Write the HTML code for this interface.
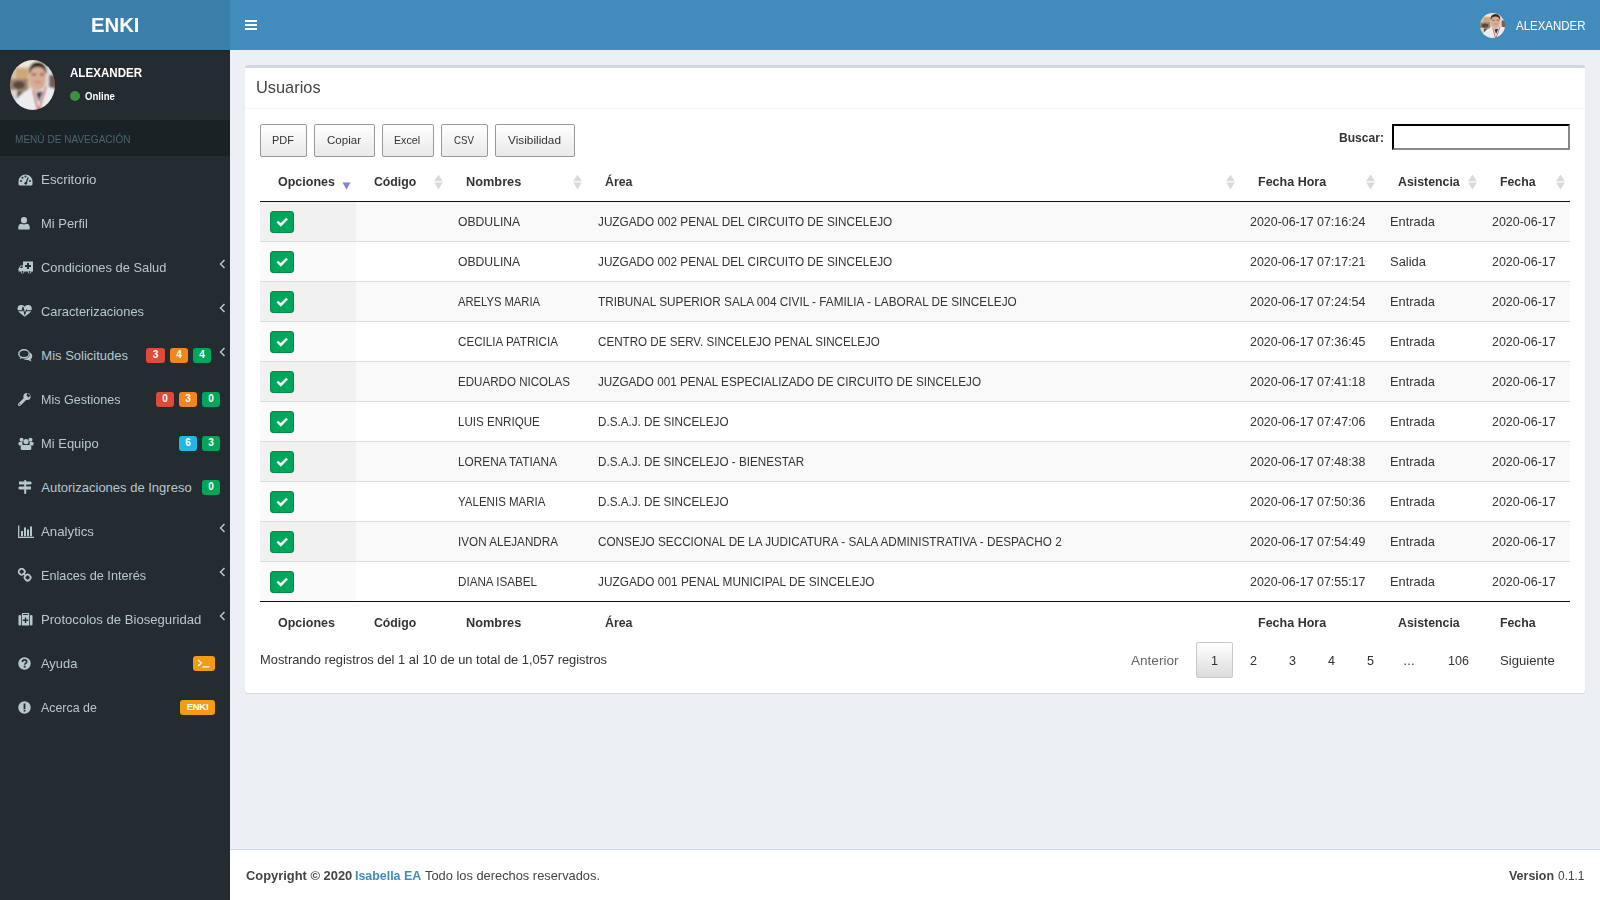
<!DOCTYPE html>
<html><head><meta charset="utf-8"><title>ENKI</title>
<style>
html,body{margin:0;padding:0;width:1600px;height:900px;overflow:hidden;background:#ecf0f5;font-family:"Liberation Sans",sans-serif;}
.t{position:absolute;white-space:nowrap;transform-origin:0 50%;}
.av{position:absolute;border-radius:50%;background:radial-gradient(ellipse at 55% 45%,#e8c9b0 0%,#c9a58a 22%,#f0eeec 40%,#dcd6d2 60%,#8a7060 85%,#5a4a40 100%);}
.bd{position:absolute;height:15px;border-radius:3px;color:#fff;font-weight:bold;text-align:center;line-height:14.5px;}
.btn{position:absolute;box-sizing:border-box;border:1px solid #999;border-radius:2px;background:linear-gradient(to bottom,#fff 0%,#e9e9e9 100%);}
.chk{position:absolute;width:24px;height:22px;box-sizing:border-box;background:#00a65a;border:1px solid #008d4c;border-radius:3px;display:flex;align-items:center;justify-content:center;}
</style></head><body>
<div style="position:absolute;left:0;top:0;width:230px;height:50px;background:#3d7fab"></div>
<div style="position:absolute;left:230px;top:0;width:1370px;height:50px;background:#428cbd"></div>
<div class="t" style="left:90.80px;top:14.87px;font-size:20px;line-height:20px;color:#fff;font-weight:bold;transform:scaleX(1.0150);">ENKI</div>
<div style="position:absolute;left:245px;top:20px;width:12px;height:2px;background:#fff"></div>
<div style="position:absolute;left:245px;top:24px;width:12px;height:2px;background:#fff"></div>
<div style="position:absolute;left:245px;top:28px;width:12px;height:2px;background:#fff"></div>
<svg style="position:absolute;left:1480px;top:12.7px" width="25" height="25" viewBox="0 0 45 50" preserveAspectRatio="none"><defs><clipPath id="avn"><ellipse cx="22.5" cy="25" rx="22.5" ry="25"/></clipPath><filter id="avnb"><feGaussianBlur stdDeviation="0.8"/></filter></defs><g clip-path="url(#avn)"><g filter="url(#avnb)"><rect x="-2" y="-2" width="50" height="54" fill="#d8c2a6"/><rect x="-2" y="-2" width="50" height="9" fill="#eee6dc"/><rect x="6" y="9" width="12" height="11" fill="#cda77a"/><rect x="-2" y="19" width="20" height="13" fill="#9a8270"/><ellipse cx="9" cy="25" rx="6" ry="4" fill="#5a463c"/><rect x="-2" y="30" width="9" height="20" fill="#d9d2ce"/><rect x="7" y="32" width="6" height="18" fill="#6a5040"/><rect x="34" y="2" width="14" height="24" fill="#dcdadd"/><rect x="39" y="15" width="9" height="13" fill="#7a5a55"/><path d="M19.5 14Q19.5 5 27.5 4.5Q35.5 5 36 14L35.5 22Q34 29 28 30Q21.5 29 20 22Z" fill="#d9ab95"/><path d="M19 14Q18.5 2 28 2Q37 2.5 36.5 14L35 12Q34 7 28 7Q21 7 20.5 12Z" fill="#35261f"/><path d="M22 14.5H26M30 14.5H34" stroke="#5a3a30" stroke-width="1.3"/><path d="M25 22H31" stroke="#a06a5a" stroke-width="0.9"/><path d="M3 50L6 40Q12 32 21 28L27 33L36 26Q42 27 47 32L47 50Z" fill="#ececef"/><path d="M23 30L28 50" stroke="#c44a4a" stroke-width="1.5"/><path d="M36 27L29 50" stroke="#c44a4a" stroke-width="1.5"/><path d="M26 33L29 42L33 31Z" fill="#2f3444"/></g></g></svg>
<div class="t" style="left:1515.50px;top:19.84px;font-size:12px;line-height:12px;color:#fff;transform:scaleX(0.9561);">ALEXANDER</div>
<div style="position:absolute;left:0;top:50px;width:230px;height:850px;background:#242c32"></div>
<div style="position:absolute;left:0;top:50px;width:230px;height:1px;background:#1b2730"></div>
<svg style="position:absolute;left:10px;top:60px" width="45" height="50" viewBox="0 0 45 50" preserveAspectRatio="none"><defs><clipPath id="avs"><ellipse cx="22.5" cy="25" rx="22.5" ry="25"/></clipPath><filter id="avsb"><feGaussianBlur stdDeviation="0.8"/></filter></defs><g clip-path="url(#avs)"><g filter="url(#avsb)"><rect x="-2" y="-2" width="50" height="54" fill="#d8c2a6"/><rect x="-2" y="-2" width="50" height="9" fill="#eee6dc"/><rect x="6" y="9" width="12" height="11" fill="#cda77a"/><rect x="-2" y="19" width="20" height="13" fill="#9a8270"/><ellipse cx="9" cy="25" rx="6" ry="4" fill="#5a463c"/><rect x="-2" y="30" width="9" height="20" fill="#d9d2ce"/><rect x="7" y="32" width="6" height="18" fill="#6a5040"/><rect x="34" y="2" width="14" height="24" fill="#dcdadd"/><rect x="39" y="15" width="9" height="13" fill="#7a5a55"/><path d="M19.5 14Q19.5 5 27.5 4.5Q35.5 5 36 14L35.5 22Q34 29 28 30Q21.5 29 20 22Z" fill="#d9ab95"/><path d="M19 14Q18.5 2 28 2Q37 2.5 36.5 14L35 12Q34 7 28 7Q21 7 20.5 12Z" fill="#35261f"/><path d="M22 14.5H26M30 14.5H34" stroke="#5a3a30" stroke-width="1.3"/><path d="M25 22H31" stroke="#a06a5a" stroke-width="0.9"/><path d="M3 50L6 40Q12 32 21 28L27 33L36 26Q42 27 47 32L47 50Z" fill="#ececef"/><path d="M23 30L28 50" stroke="#c44a4a" stroke-width="1.5"/><path d="M36 27L29 50" stroke="#c44a4a" stroke-width="1.5"/><path d="M26 33L29 42L33 31Z" fill="#2f3444"/></g></g></svg>
<div class="t" style="left:69.70px;top:66.74px;font-size:12px;line-height:12px;color:#fff;font-weight:bold;transform:scaleX(0.9655);">ALEXANDER</div>
<div style="position:absolute;left:70px;top:91px;width:10px;height:10px;border-radius:50%;background:#3d9142"></div>
<div class="t" style="left:85.00px;top:92.13px;font-size:10px;line-height:10px;color:#fff;font-weight:bold;transform:scaleX(0.9610);">Online</div>
<div style="position:absolute;left:0;top:120px;width:230px;height:36px;background:#1a2226"></div>
<div class="t" style="left:15.30px;top:133.59px;font-size:11px;line-height:11px;color:#4b646f;transform:scaleX(0.9144);">MENÚ DE NAVEGACIÓN</div>
<div class="t" style="left:41.30px;top:173.00px;font-size:13px;line-height:13px;color:#b8c7ce;transform:scaleX(1.0244);">Escritorio</div>
<div style="position:absolute;left:18px;top:174px;line-height:0"><svg width="15" height="12" viewBox="0 0 15 12"><path d="M7.5 0.5A7 7 0 0 0 0.5 7.5V10Q0.5 11.5 2 11.5H13Q14.5 11.5 14.5 10V7.5A7 7 0 0 0 7.5 0.5Z" fill="#b8c7ce"/><circle cx="3" cy="7" r="1" fill="#242c32"/><circle cx="4.5" cy="3.8" r="1" fill="#242c32"/><circle cx="7.5" cy="2.5" r="1" fill="#242c32"/><circle cx="12" cy="7" r="1" fill="#242c32"/><path d="M10.2 3.5L8.3 8.6" stroke="#242c32" stroke-width="1.3"/><circle cx="7.8" cy="9.3" r="1.4" fill="#242c32"/></svg></div>
<div class="t" style="left:41.30px;top:217.00px;font-size:13px;line-height:13px;color:#b8c7ce;transform:scaleX(0.9968);">Mi Perfil</div>
<div style="position:absolute;left:18px;top:217px;line-height:0"><svg width="12" height="13" viewBox="0 0 12 13"><circle cx="6" cy="3.2" r="3.1" fill="#b8c7ce"/><path d="M0.3 12.5V10.5Q0.3 7 3.5 6.8Q6 8 8.5 6.8Q11.7 7 11.7 10.5V12.5Z" fill="#b8c7ce"/></svg></div>
<div class="t" style="left:41.30px;top:261.00px;font-size:13px;line-height:13px;color:#b8c7ce;transform:scaleX(0.9915);">Condiciones de Salud</div>
<div style="position:absolute;left:18px;top:261px;line-height:0"><svg width="16" height="13" viewBox="0 0 16 13"><path d="M5 0.5H15V10.5H13.5A2 2 0 0 1 9.5 10.5H6.5A2 2 0 0 1 2.5 10.5H0.5V7.5L2.5 4.5H5Z" fill="#b8c7ce"/><path d="M9 2H11V4H13V6H11V8H9V6H7V4H9Z" fill="#242c32"/><path d="M2 7L3 5.2H4.5V7Z" fill="#242c32"/><circle cx="4.5" cy="11" r="1" fill="#242c32"/><circle cx="11.5" cy="11" r="1" fill="#242c32"/></svg></div>
<div class="t" style="left:41.30px;top:305.00px;font-size:13px;line-height:13px;color:#b8c7ce;transform:scaleX(0.9899);">Caracterizaciones</div>
<div style="position:absolute;left:17px;top:304px;line-height:0"><svg width="16" height="14" viewBox="-0.5 -0.5 16 14"><path d="M7.2 2.2C5.8 -0.3 0 -0.5 0 4C0 6 1.5 7.5 2.5 8.5L7.2 12.3L12 8.5C13 7.5 14.3 6 14.3 4C14.3 -0.5 8.6 -0.3 7.2 2.2Z" fill="#b8c7ce"/><path d="M-0.5 6.3H4.8L5.4 2.4L7.3 9.6L8.9 5.6L9.4 6.3H15" stroke="#242c32" stroke-width="1.1" fill="none"/></svg></div>
<div class="t" style="left:41.30px;top:349.00px;font-size:13px;line-height:13px;color:#b8c7ce;">Mis Solicitudes</div>
<div style="position:absolute;left:18px;top:349px;line-height:0"><svg width="15" height="13" viewBox="0 0 15 13"><ellipse cx="6" cy="4.8" rx="5.2" ry="4" stroke="#b8c7ce" stroke-width="1.4" fill="none"/><path d="M1.5 9.5L4 8L3 10Z" fill="#b8c7ce"/><path d="M12 3.5Q14.5 5 14.3 7.5Q14 9.5 12.5 10.3L13.5 12.5L10 11Q7 11.2 5.5 10Q9 10 11 8Q12.5 6 12 3.5Z" fill="#b8c7ce"/></svg></div>
<div class="t" style="left:41.30px;top:393.00px;font-size:13px;line-height:13px;color:#b8c7ce;transform:scaleX(0.9652);">Mis Gestiones</div>
<div style="position:absolute;left:18px;top:392px;line-height:0"><svg width="13" height="14" viewBox="0 0 13 14"><path d="M1.5 12.5L7 7" stroke="#b8c7ce" stroke-width="3" stroke-linecap="round"/><circle cx="9" cy="4.5" r="3.6" fill="#b8c7ce"/><path d="M9.5 1L12.5 3.5L10.5 5.5L8.5 3.5Z" fill="#242c32"/><circle cx="1.8" cy="12.2" r="0.6" fill="#242c32"/></svg></div>
<div class="t" style="left:41.30px;top:437.00px;font-size:13px;line-height:13px;color:#b8c7ce;transform:scaleX(0.9964);">Mi Equipo</div>
<div style="position:absolute;left:18px;top:437px;line-height:0"><svg width="16" height="13" viewBox="0 0 16 13"><circle cx="3.5" cy="2.8" r="2" fill="#b8c7ce"/><circle cx="12.5" cy="2.8" r="2" fill="#b8c7ce"/><rect x="0.5" y="5" width="4" height="3.5" rx="1" fill="#b8c7ce"/><rect x="11.5" y="5" width="4" height="3.5" rx="1" fill="#b8c7ce"/><circle cx="8" cy="4.6" r="2.6" fill="#b8c7ce"/><rect x="2.7" y="8" width="10.6" height="5" rx="1.5" fill="#b8c7ce"/></svg></div>
<div class="t" style="left:41.30px;top:481.00px;font-size:13px;line-height:13px;color:#b8c7ce;">Autorizaciones de Ingreso</div>
<div style="position:absolute;left:18px;top:480px;line-height:0"><svg width="14" height="14" viewBox="0 0 14 14"><rect x="6.2" y="0" width="2" height="14" rx="0.8" fill="#b8c7ce"/><path d="M1 1.5H12.5L14 3L12.5 4.5H1Z" fill="#b8c7ce"/><path d="M1.5 6.5H13V9.5H1.5L0 8Z" fill="#b8c7ce"/></svg></div>
<div class="t" style="left:41.30px;top:525.00px;font-size:13px;line-height:13px;color:#b8c7ce;transform:scaleX(1.0188);">Analytics</div>
<div style="position:absolute;left:18px;top:525px;line-height:0"><svg width="16" height="13" viewBox="0 0 16 13"><path d="M0.7 0.5V12.3H16" stroke="#b8c7ce" stroke-width="1.3" fill="none"/><rect x="3" y="6" width="2" height="5.3" fill="#b8c7ce"/><rect x="6" y="2.5" width="2" height="8.8" fill="#b8c7ce"/><rect x="9" y="4.5" width="2" height="6.8" fill="#b8c7ce"/><rect x="12" y="1.5" width="2" height="9.8" fill="#b8c7ce"/></svg></div>
<div class="t" style="left:41.30px;top:569.00px;font-size:13px;line-height:13px;color:#b8c7ce;transform:scaleX(0.9770);">Enlaces de Interés</div>
<div style="position:absolute;left:18px;top:568px;line-height:0"><svg width="14" height="14" viewBox="0 0 14 14"><rect x="0.9" y="0.9" width="5.6" height="5.6" rx="2.2" transform="rotate(45 3.7 3.7)" stroke="#b8c7ce" stroke-width="1.8" fill="none"/><rect x="6.8" y="6.8" width="5.6" height="5.6" rx="2.2" transform="rotate(45 9.6 9.6)" stroke="#b8c7ce" stroke-width="1.8" fill="none"/><path d="M5.6 5.6L7.7 7.7" stroke="#b8c7ce" stroke-width="1.6"/></svg></div>
<div class="t" style="left:41.30px;top:613.00px;font-size:13px;line-height:13px;color:#b8c7ce;transform:scaleX(1.0082);">Protocolos de Bioseguridad</div>
<div style="position:absolute;left:18px;top:613px;line-height:0"><svg width="15" height="13" viewBox="0 0 15 13"><path d="M4.5 2V0.5H10.5V2" stroke="#b8c7ce" stroke-width="1.2" fill="none"/><rect x="0.5" y="2" width="2.5" height="10.5" rx="1" fill="#b8c7ce"/><rect x="12" y="2" width="2.5" height="10.5" rx="1" fill="#b8c7ce"/><rect x="3.8" y="2" width="7.4" height="10.5" fill="#b8c7ce"/><path d="M6.8 4.5H8.2V6.6H10.2V8H8.2V10.1H6.8V8H4.8V6.6H6.8Z" fill="#242c32"/></svg></div>
<div class="t" style="left:41.30px;top:657.00px;font-size:13px;line-height:13px;color:#b8c7ce;transform:scaleX(0.9911);">Ayuda</div>
<div style="position:absolute;left:18px;top:657px;line-height:0"><svg width="13" height="13" viewBox="0 0 13 13"><circle cx="6.5" cy="6.5" r="6.2" fill="#b8c7ce"/><path d="M4.3 5Q4.3 2.9 6.5 2.9Q8.7 2.9 8.7 4.8Q8.7 6 7.3 6.6Q6.7 6.9 6.7 7.8" stroke="#242c32" stroke-width="1.6" fill="none"/><rect x="5.7" y="8.8" width="1.9" height="1.8" fill="#242c32"/></svg></div>
<div class="t" style="left:41.30px;top:701.00px;font-size:13px;line-height:13px;color:#b8c7ce;transform:scaleX(0.9533);">Acerca de</div>
<div style="position:absolute;left:18px;top:701px;line-height:0"><svg width="13" height="13" viewBox="0 0 13 13"><circle cx="6.5" cy="6.5" r="6.2" fill="#b8c7ce"/><rect x="5.6" y="2.5" width="1.8" height="5.5" fill="#242c32"/><rect x="5.6" y="8.8" width="1.8" height="1.8" fill="#242c32"/></svg></div>
<div class="bd" style="left:146px;top:348px;width:19px;background:#dd4b39;font-size:10px">3</div>
<div class="bd" style="left:170px;top:348px;width:18px;background:#f0861e;font-size:10px">4</div>
<div class="bd" style="left:193px;top:348px;width:18px;background:#00a65a;font-size:10px">4</div>
<div class="bd" style="left:156px;top:392px;width:18px;background:#dd4b39;font-size:10px">0</div>
<div class="bd" style="left:179px;top:392px;width:18px;background:#f0861e;font-size:10px">3</div>
<div class="bd" style="left:202px;top:392px;width:18px;background:#00a65a;font-size:10px">0</div>
<div class="bd" style="left:179px;top:436px;width:18px;background:#22b7e5;font-size:10px">6</div>
<div class="bd" style="left:202px;top:436px;width:18px;background:#00a65a;font-size:10px">3</div>
<div class="bd" style="left:202px;top:480px;width:18px;background:#00a65a;font-size:10px">0</div>
<div class="bd" style="left:193px;top:656px;width:22px;background:#f39c12"><svg width="14" height="9" viewBox="0 0 14 9" style="position:absolute;left:4px;top:3px"><path d="M1 1L4.5 4L1 7" stroke="#fff" stroke-width="1.3" fill="none"/><rect x="5.5" y="7.2" width="7" height="1.3" fill="#fff"/></svg></div>
<div class="bd" style="left:180px;top:700px;width:35px;background:#f39c12;font-size:9.5px;letter-spacing:-0.3px">ENKI</div>
<svg style="position:absolute;left:219px;top:259px" width="7" height="10" viewBox="0 0 7 10"><path d="M5.5 1L1.5 5L5.5 9" stroke="#b8c7ce" stroke-width="1.5" fill="none"/></svg>
<svg style="position:absolute;left:219px;top:303px" width="7" height="10" viewBox="0 0 7 10"><path d="M5.5 1L1.5 5L5.5 9" stroke="#b8c7ce" stroke-width="1.5" fill="none"/></svg>
<svg style="position:absolute;left:219px;top:347px" width="7" height="10" viewBox="0 0 7 10"><path d="M5.5 1L1.5 5L5.5 9" stroke="#b8c7ce" stroke-width="1.5" fill="none"/></svg>
<svg style="position:absolute;left:219px;top:523px" width="7" height="10" viewBox="0 0 7 10"><path d="M5.5 1L1.5 5L5.5 9" stroke="#b8c7ce" stroke-width="1.5" fill="none"/></svg>
<svg style="position:absolute;left:219px;top:567px" width="7" height="10" viewBox="0 0 7 10"><path d="M5.5 1L1.5 5L5.5 9" stroke="#b8c7ce" stroke-width="1.5" fill="none"/></svg>
<svg style="position:absolute;left:219px;top:611px" width="7" height="10" viewBox="0 0 7 10"><path d="M5.5 1L1.5 5L5.5 9" stroke="#b8c7ce" stroke-width="1.5" fill="none"/></svg>
<div style="position:absolute;left:230px;top:50px;width:1370px;height:799px;background:#ecf0f5"></div>
<div style="position:absolute;left:245px;top:65px;width:1340px;height:628px;background:#fff;border-top:3px solid #d2d6de;box-sizing:border-box;border-radius:3px;box-shadow:0 1px 1px rgba(0,0,0,0.1)"></div>
<div style="position:absolute;left:245px;top:108px;width:1340px;height:1px;background:#f4f4f4"></div>
<div class="t" style="left:255.50px;top:78.61px;font-size:17px;line-height:17px;color:#444;transform:scaleX(0.9630);">Usuarios</div>
<div class="btn" style="left:260px;top:124px;width:47px;height:33px"></div>
<div class="t" style="left:271.90px;top:135.27px;font-size:11.5px;line-height:11.5px;color:#333;transform:scaleX(0.9565);">PDF</div>
<div class="btn" style="left:314px;top:124px;width:61px;height:33px"></div>
<div class="t" style="left:326.90px;top:135.27px;font-size:11.5px;line-height:11.5px;color:#333;transform:scaleX(1.0036);">Copiar</div>
<div class="btn" style="left:382px;top:124px;width:52px;height:33px"></div>
<div class="t" style="left:394.40px;top:135.27px;font-size:11.5px;line-height:11.5px;color:#333;transform:scaleX(0.9245);">Excel</div>
<div class="btn" style="left:441px;top:124px;width:47px;height:33px"></div>
<div class="t" style="left:453.90px;top:135.27px;font-size:11.5px;line-height:11.5px;color:#333;transform:scaleX(0.8458);">CSV</div>
<div class="btn" style="left:495px;top:124px;width:80px;height:33px"></div>
<div class="t" style="left:507.90px;top:135.27px;font-size:11.5px;line-height:11.5px;color:#333;transform:scaleX(1.0277);">Visibilidad</div>
<div class="t" style="left:1339.40px;top:130.80px;font-size:13px;line-height:13px;color:#333;font-weight:bold;transform:scaleX(0.9296);">Buscar:</div>
<div style="position:absolute;left:1392px;top:124px;width:178px;height:26px;box-sizing:border-box;border:2px inset #767676;border-top-color:#111;border-left-color:#111;border-right-color:#888;border-bottom-color:#888;background:#fff"></div>
<div style="position:absolute;left:260px;top:201px;width:1310px;height:40px;background:#f9f9f9"></div>
<div style="position:absolute;left:260px;top:201px;width:96px;height:40px;background:#f1f1f1"></div>
<div style="position:absolute;left:260px;top:241px;width:1310px;height:40px;background:#fff"></div>
<div style="position:absolute;left:260px;top:241px;width:96px;height:40px;background:#fafafa"></div>
<div style="position:absolute;left:260px;top:241px;width:1310px;height:1px;background:#ddd"></div>
<div style="position:absolute;left:260px;top:281px;width:1310px;height:40px;background:#f9f9f9"></div>
<div style="position:absolute;left:260px;top:281px;width:96px;height:40px;background:#f1f1f1"></div>
<div style="position:absolute;left:260px;top:281px;width:1310px;height:1px;background:#ddd"></div>
<div style="position:absolute;left:260px;top:321px;width:1310px;height:40px;background:#fff"></div>
<div style="position:absolute;left:260px;top:321px;width:96px;height:40px;background:#fafafa"></div>
<div style="position:absolute;left:260px;top:321px;width:1310px;height:1px;background:#ddd"></div>
<div style="position:absolute;left:260px;top:361px;width:1310px;height:40px;background:#f9f9f9"></div>
<div style="position:absolute;left:260px;top:361px;width:96px;height:40px;background:#f1f1f1"></div>
<div style="position:absolute;left:260px;top:361px;width:1310px;height:1px;background:#ddd"></div>
<div style="position:absolute;left:260px;top:401px;width:1310px;height:40px;background:#fff"></div>
<div style="position:absolute;left:260px;top:401px;width:96px;height:40px;background:#fafafa"></div>
<div style="position:absolute;left:260px;top:401px;width:1310px;height:1px;background:#ddd"></div>
<div style="position:absolute;left:260px;top:441px;width:1310px;height:40px;background:#f9f9f9"></div>
<div style="position:absolute;left:260px;top:441px;width:96px;height:40px;background:#f1f1f1"></div>
<div style="position:absolute;left:260px;top:441px;width:1310px;height:1px;background:#ddd"></div>
<div style="position:absolute;left:260px;top:481px;width:1310px;height:40px;background:#fff"></div>
<div style="position:absolute;left:260px;top:481px;width:96px;height:40px;background:#fafafa"></div>
<div style="position:absolute;left:260px;top:481px;width:1310px;height:1px;background:#ddd"></div>
<div style="position:absolute;left:260px;top:521px;width:1310px;height:40px;background:#f9f9f9"></div>
<div style="position:absolute;left:260px;top:521px;width:96px;height:40px;background:#f1f1f1"></div>
<div style="position:absolute;left:260px;top:521px;width:1310px;height:1px;background:#ddd"></div>
<div style="position:absolute;left:260px;top:561px;width:1310px;height:40px;background:#fff"></div>
<div style="position:absolute;left:260px;top:561px;width:96px;height:40px;background:#fafafa"></div>
<div style="position:absolute;left:260px;top:561px;width:1310px;height:1px;background:#ddd"></div>
<div style="position:absolute;left:260px;top:200.5px;width:1310px;height:1.5px;background:#111"></div>
<div style="position:absolute;left:260px;top:601px;width:1310px;height:1px;background:#111"></div>
<div class="t" style="left:278.40px;top:175.30px;font-size:13px;line-height:13px;color:#333;font-weight:bold;transform:scaleX(0.9622);">Opciones</div>
<div class="t" style="left:278.40px;top:616.20px;font-size:13px;line-height:13px;color:#333;font-weight:bold;transform:scaleX(0.9622);">Opciones</div>
<div class="t" style="left:374.40px;top:175.30px;font-size:13px;line-height:13px;color:#333;font-weight:bold;transform:scaleX(0.9427);">Código</div>
<div class="t" style="left:374.40px;top:616.20px;font-size:13px;line-height:13px;color:#333;font-weight:bold;transform:scaleX(0.9427);">Código</div>
<div class="t" style="left:466.40px;top:175.30px;font-size:13px;line-height:13px;color:#333;font-weight:bold;transform:scaleX(0.9814);">Nombres</div>
<div class="t" style="left:466.40px;top:616.20px;font-size:13px;line-height:13px;color:#333;font-weight:bold;transform:scaleX(0.9814);">Nombres</div>
<div class="t" style="left:605.40px;top:175.30px;font-size:13px;line-height:13px;color:#333;font-weight:bold;transform:scaleX(0.9513);">Área</div>
<div class="t" style="left:605.40px;top:616.20px;font-size:13px;line-height:13px;color:#333;font-weight:bold;transform:scaleX(0.9513);">Área</div>
<div class="t" style="left:1258.40px;top:175.30px;font-size:13px;line-height:13px;color:#333;font-weight:bold;transform:scaleX(0.9632);">Fecha Hora</div>
<div class="t" style="left:1258.40px;top:616.20px;font-size:13px;line-height:13px;color:#333;font-weight:bold;transform:scaleX(0.9632);">Fecha Hora</div>
<div class="t" style="left:1398.40px;top:175.30px;font-size:13px;line-height:13px;color:#333;font-weight:bold;transform:scaleX(0.9487);">Asistencia</div>
<div class="t" style="left:1398.40px;top:616.20px;font-size:13px;line-height:13px;color:#333;font-weight:bold;transform:scaleX(0.9487);">Asistencia</div>
<div class="t" style="left:1500.40px;top:175.30px;font-size:13px;line-height:13px;color:#333;font-weight:bold;transform:scaleX(0.9475);">Fecha</div>
<div class="t" style="left:1500.40px;top:616.20px;font-size:13px;line-height:13px;color:#333;font-weight:bold;transform:scaleX(0.9475);">Fecha</div>
<svg style="position:absolute;left:342px;top:181.5px" width="9" height="8" viewBox="0 0 9 8"><path d="M0.5 0.5H8.5L4.5 7.5Z" fill="#8280e0"/></svg>
<svg style="position:absolute;left:434.0px;top:173.5px" width="9" height="16" viewBox="0 0 9 16"><path d="M4.5 0.5L8.8 7.3H0.2Z M0.2 8.5H8.8L4.5 15.4Z" fill="#d9d9d9"/></svg>
<svg style="position:absolute;left:573.0px;top:173.5px" width="9" height="16" viewBox="0 0 9 16"><path d="M4.5 0.5L8.8 7.3H0.2Z M0.2 8.5H8.8L4.5 15.4Z" fill="#d9d9d9"/></svg>
<svg style="position:absolute;left:1226.0px;top:173.5px" width="9" height="16" viewBox="0 0 9 16"><path d="M4.5 0.5L8.8 7.3H0.2Z M0.2 8.5H8.8L4.5 15.4Z" fill="#d9d9d9"/></svg>
<svg style="position:absolute;left:1366.0px;top:173.5px" width="9" height="16" viewBox="0 0 9 16"><path d="M4.5 0.5L8.8 7.3H0.2Z M0.2 8.5H8.8L4.5 15.4Z" fill="#d9d9d9"/></svg>
<svg style="position:absolute;left:1468.0px;top:173.5px" width="9" height="16" viewBox="0 0 9 16"><path d="M4.5 0.5L8.8 7.3H0.2Z M0.2 8.5H8.8L4.5 15.4Z" fill="#d9d9d9"/></svg>
<svg style="position:absolute;left:1556.0px;top:173.5px" width="9" height="16" viewBox="0 0 9 16"><path d="M4.5 0.5L8.8 7.3H0.2Z M0.2 8.5H8.8L4.5 15.4Z" fill="#d9d9d9"/></svg>
<div class="chk" style="left:270px;top:211px"><svg width="12" height="10" viewBox="0 0 12 10"><path d="M1.4 4.6L4.8 7.9L11 1.6" stroke="#fff" stroke-width="2.5" fill="none"/></svg></div>
<div class="t" style="left:458.30px;top:215.00px;font-size:13px;line-height:13px;color:#333;transform:scaleX(0.9359);">OBDULINA</div>
<div class="t" style="left:597.50px;top:215.00px;font-size:13px;line-height:13px;color:#333;transform:scaleX(0.9045);">JUZGADO 002 PENAL DEL CIRCUITO DE SINCELEJO</div>
<div class="t" style="left:1250.30px;top:215.00px;font-size:13px;line-height:13px;color:#333;transform:scaleX(0.9560);">2020-06-17 07:16:24</div>
<div class="t" style="left:1390.40px;top:215.00px;font-size:13px;line-height:13px;color:#333;transform:scaleX(0.9883);">Entrada</div>
<div class="t" style="left:1492.10px;top:215.00px;font-size:13px;line-height:13px;color:#333;transform:scaleX(0.9579);">2020-06-17</div>
<div class="chk" style="left:270px;top:251px"><svg width="12" height="10" viewBox="0 0 12 10"><path d="M1.4 4.6L4.8 7.9L11 1.6" stroke="#fff" stroke-width="2.5" fill="none"/></svg></div>
<div class="t" style="left:458.30px;top:255.00px;font-size:13px;line-height:13px;color:#333;transform:scaleX(0.9359);">OBDULINA</div>
<div class="t" style="left:597.50px;top:255.00px;font-size:13px;line-height:13px;color:#333;transform:scaleX(0.9045);">JUZGADO 002 PENAL DEL CIRCUITO DE SINCELEJO</div>
<div class="t" style="left:1250.30px;top:255.00px;font-size:13px;line-height:13px;color:#333;transform:scaleX(0.9560);">2020-06-17 07:17:21</div>
<div class="t" style="left:1390.40px;top:255.00px;font-size:13px;line-height:13px;color:#333;transform:scaleX(0.9962);">Salida</div>
<div class="t" style="left:1492.10px;top:255.00px;font-size:13px;line-height:13px;color:#333;transform:scaleX(0.9579);">2020-06-17</div>
<div class="chk" style="left:270px;top:291px"><svg width="12" height="10" viewBox="0 0 12 10"><path d="M1.4 4.6L4.8 7.9L11 1.6" stroke="#fff" stroke-width="2.5" fill="none"/></svg></div>
<div class="t" style="left:458.30px;top:295.00px;font-size:13px;line-height:13px;color:#333;transform:scaleX(0.8620);">ARELYS MARIA</div>
<div class="t" style="left:597.50px;top:295.00px;font-size:13px;line-height:13px;color:#333;transform:scaleX(0.9070);">TRIBUNAL SUPERIOR SALA 004 CIVIL - FAMILIA - LABORAL DE SINCELEJO</div>
<div class="t" style="left:1250.30px;top:295.00px;font-size:13px;line-height:13px;color:#333;transform:scaleX(0.9560);">2020-06-17 07:24:54</div>
<div class="t" style="left:1390.40px;top:295.00px;font-size:13px;line-height:13px;color:#333;transform:scaleX(0.9883);">Entrada</div>
<div class="t" style="left:1492.10px;top:295.00px;font-size:13px;line-height:13px;color:#333;transform:scaleX(0.9579);">2020-06-17</div>
<div class="chk" style="left:270px;top:331px"><svg width="12" height="10" viewBox="0 0 12 10"><path d="M1.4 4.6L4.8 7.9L11 1.6" stroke="#fff" stroke-width="2.5" fill="none"/></svg></div>
<div class="t" style="left:458.30px;top:335.00px;font-size:13px;line-height:13px;color:#333;transform:scaleX(0.8969);">CECILIA PATRICIA</div>
<div class="t" style="left:597.50px;top:335.00px;font-size:13px;line-height:13px;color:#333;transform:scaleX(0.8938);">CENTRO DE SERV. SINCELEJO PENAL SINCELEJO</div>
<div class="t" style="left:1250.30px;top:335.00px;font-size:13px;line-height:13px;color:#333;transform:scaleX(0.9560);">2020-06-17 07:36:45</div>
<div class="t" style="left:1390.40px;top:335.00px;font-size:13px;line-height:13px;color:#333;transform:scaleX(0.9883);">Entrada</div>
<div class="t" style="left:1492.10px;top:335.00px;font-size:13px;line-height:13px;color:#333;transform:scaleX(0.9579);">2020-06-17</div>
<div class="chk" style="left:270px;top:371px"><svg width="12" height="10" viewBox="0 0 12 10"><path d="M1.4 4.6L4.8 7.9L11 1.6" stroke="#fff" stroke-width="2.5" fill="none"/></svg></div>
<div class="t" style="left:458.30px;top:375.00px;font-size:13px;line-height:13px;color:#333;transform:scaleX(0.8911);">EDUARDO NICOLAS</div>
<div class="t" style="left:597.50px;top:375.00px;font-size:13px;line-height:13px;color:#333;transform:scaleX(0.9001);">JUZGADO 001 PENAL ESPECIALIZADO DE CIRCUITO DE SINCELEJO</div>
<div class="t" style="left:1250.30px;top:375.00px;font-size:13px;line-height:13px;color:#333;transform:scaleX(0.9560);">2020-06-17 07:41:18</div>
<div class="t" style="left:1390.40px;top:375.00px;font-size:13px;line-height:13px;color:#333;transform:scaleX(0.9883);">Entrada</div>
<div class="t" style="left:1492.10px;top:375.00px;font-size:13px;line-height:13px;color:#333;transform:scaleX(0.9579);">2020-06-17</div>
<div class="chk" style="left:270px;top:411px"><svg width="12" height="10" viewBox="0 0 12 10"><path d="M1.4 4.6L4.8 7.9L11 1.6" stroke="#fff" stroke-width="2.5" fill="none"/></svg></div>
<div class="t" style="left:458.30px;top:415.00px;font-size:13px;line-height:13px;color:#333;transform:scaleX(0.8911);">LUIS ENRIQUE</div>
<div class="t" style="left:597.50px;top:415.00px;font-size:13px;line-height:13px;color:#333;transform:scaleX(0.8987);">D.S.A.J. DE SINCELEJO</div>
<div class="t" style="left:1250.30px;top:415.00px;font-size:13px;line-height:13px;color:#333;transform:scaleX(0.9560);">2020-06-17 07:47:06</div>
<div class="t" style="left:1390.40px;top:415.00px;font-size:13px;line-height:13px;color:#333;transform:scaleX(0.9883);">Entrada</div>
<div class="t" style="left:1492.10px;top:415.00px;font-size:13px;line-height:13px;color:#333;transform:scaleX(0.9579);">2020-06-17</div>
<div class="chk" style="left:270px;top:451px"><svg width="12" height="10" viewBox="0 0 12 10"><path d="M1.4 4.6L4.8 7.9L11 1.6" stroke="#fff" stroke-width="2.5" fill="none"/></svg></div>
<div class="t" style="left:458.30px;top:455.00px;font-size:13px;line-height:13px;color:#333;transform:scaleX(0.9075);">LORENA TATIANA</div>
<div class="t" style="left:597.50px;top:455.00px;font-size:13px;line-height:13px;color:#333;transform:scaleX(0.8988);">D.S.A.J. DE SINCELEJO - BIENESTAR</div>
<div class="t" style="left:1250.30px;top:455.00px;font-size:13px;line-height:13px;color:#333;transform:scaleX(0.9560);">2020-06-17 07:48:38</div>
<div class="t" style="left:1390.40px;top:455.00px;font-size:13px;line-height:13px;color:#333;transform:scaleX(0.9883);">Entrada</div>
<div class="t" style="left:1492.10px;top:455.00px;font-size:13px;line-height:13px;color:#333;transform:scaleX(0.9579);">2020-06-17</div>
<div class="chk" style="left:270px;top:491px"><svg width="12" height="10" viewBox="0 0 12 10"><path d="M1.4 4.6L4.8 7.9L11 1.6" stroke="#fff" stroke-width="2.5" fill="none"/></svg></div>
<div class="t" style="left:458.30px;top:495.00px;font-size:13px;line-height:13px;color:#333;transform:scaleX(0.8862);">YALENIS MARIA</div>
<div class="t" style="left:597.50px;top:495.00px;font-size:13px;line-height:13px;color:#333;transform:scaleX(0.8987);">D.S.A.J. DE SINCELEJO</div>
<div class="t" style="left:1250.30px;top:495.00px;font-size:13px;line-height:13px;color:#333;transform:scaleX(0.9560);">2020-06-17 07:50:36</div>
<div class="t" style="left:1390.40px;top:495.00px;font-size:13px;line-height:13px;color:#333;transform:scaleX(0.9883);">Entrada</div>
<div class="t" style="left:1492.10px;top:495.00px;font-size:13px;line-height:13px;color:#333;transform:scaleX(0.9579);">2020-06-17</div>
<div class="chk" style="left:270px;top:531px"><svg width="12" height="10" viewBox="0 0 12 10"><path d="M1.4 4.6L4.8 7.9L11 1.6" stroke="#fff" stroke-width="2.5" fill="none"/></svg></div>
<div class="t" style="left:458.30px;top:535.00px;font-size:13px;line-height:13px;color:#333;transform:scaleX(0.8988);">IVON ALEJANDRA</div>
<div class="t" style="left:597.50px;top:535.00px;font-size:13px;line-height:13px;color:#333;transform:scaleX(0.9028);">CONSEJO SECCIONAL DE LA JUDICATURA - SALA ADMINISTRATIVA - DESPACHO 2</div>
<div class="t" style="left:1250.30px;top:535.00px;font-size:13px;line-height:13px;color:#333;transform:scaleX(0.9560);">2020-06-17 07:54:49</div>
<div class="t" style="left:1390.40px;top:535.00px;font-size:13px;line-height:13px;color:#333;transform:scaleX(0.9883);">Entrada</div>
<div class="t" style="left:1492.10px;top:535.00px;font-size:13px;line-height:13px;color:#333;transform:scaleX(0.9579);">2020-06-17</div>
<div class="chk" style="left:270px;top:571px"><svg width="12" height="10" viewBox="0 0 12 10"><path d="M1.4 4.6L4.8 7.9L11 1.6" stroke="#fff" stroke-width="2.5" fill="none"/></svg></div>
<div class="t" style="left:458.30px;top:575.00px;font-size:13px;line-height:13px;color:#333;transform:scaleX(0.8962);">DIANA ISABEL</div>
<div class="t" style="left:597.50px;top:575.00px;font-size:13px;line-height:13px;color:#333;transform:scaleX(0.9106);">JUZGADO 001 PENAL MUNICIPAL DE SINCELEJO</div>
<div class="t" style="left:1250.30px;top:575.00px;font-size:13px;line-height:13px;color:#333;transform:scaleX(0.9560);">2020-06-17 07:55:17</div>
<div class="t" style="left:1390.40px;top:575.00px;font-size:13px;line-height:13px;color:#333;transform:scaleX(0.9883);">Entrada</div>
<div class="t" style="left:1492.10px;top:575.00px;font-size:13px;line-height:13px;color:#333;transform:scaleX(0.9579);">2020-06-17</div>
<div class="t" style="left:260.30px;top:653.00px;font-size:13px;line-height:13px;color:#333;transform:scaleX(0.9900);">Mostrando registros del 1 al 10 de un total de 1,057 registros</div>
<div style="position:absolute;left:1196px;top:642px;width:37px;height:36px;box-sizing:border-box;border:1px solid #cacaca;background:linear-gradient(to bottom,#fff 0%,#dcdcdc 100%);border-radius:2px"></div>
<div class="t" style="left:1131.30px;top:654.00px;font-size:13px;line-height:13px;color:#666;transform:scaleX(1.0435);">Anterior</div>
<div class="t" style="left:1211.00px;top:654.00px;font-size:13px;line-height:13px;color:#333;transform:scaleX(0.9682);">1</div>
<div class="t" style="left:1249.50px;top:654.00px;font-size:13px;line-height:13px;color:#333;transform:scaleX(0.9682);">2</div>
<div class="t" style="left:1288.50px;top:654.00px;font-size:13px;line-height:13px;color:#333;transform:scaleX(0.9682);">3</div>
<div class="t" style="left:1327.50px;top:654.00px;font-size:13px;line-height:13px;color:#333;transform:scaleX(0.9682);">4</div>
<div class="t" style="left:1366.50px;top:654.00px;font-size:13px;line-height:13px;color:#333;transform:scaleX(0.9682);">5</div>
<div class="t" style="left:1403.00px;top:654.00px;font-size:13px;line-height:13px;color:#333;transform:scaleX(0.9231);">…</div>
<div class="t" style="left:1447.50px;top:654.00px;font-size:13px;line-height:13px;color:#333;transform:scaleX(0.9682);">106</div>
<div class="t" style="left:1500.00px;top:654.00px;font-size:13px;line-height:13px;color:#333;transform:scaleX(1.0090);">Siguiente</div>
<div style="position:absolute;left:230px;top:849px;width:1370px;height:51px;background:#fff;border-top:1px solid #d2d6de;box-sizing:border-box"></div>
<div class="t" style="left:245.60px;top:869.00px;font-size:13px;line-height:13px;color:#444;font-weight:bold;transform:scaleX(0.9925);">Copyright © 2020</div>
<div class="t" style="left:355.00px;top:869.00px;font-size:13px;line-height:13px;color:#3c8dbc;font-weight:bold;transform:scaleX(0.9543);">Isabella EA</div>
<div class="t" style="left:425.30px;top:869.00px;font-size:13px;line-height:13px;color:#444;transform:scaleX(0.9884);">Todo los derechos reservados.</div>
<div class="t" style="left:1508.50px;top:868.50px;font-size:13px;line-height:13px;color:#444;font-weight:bold;transform:scaleX(0.9581);">Version</div>
<div class="t" style="left:1557.50px;top:868.50px;font-size:13px;line-height:13px;color:#444;transform:scaleX(0.9165);">0.1.1</div>
</body></html>
